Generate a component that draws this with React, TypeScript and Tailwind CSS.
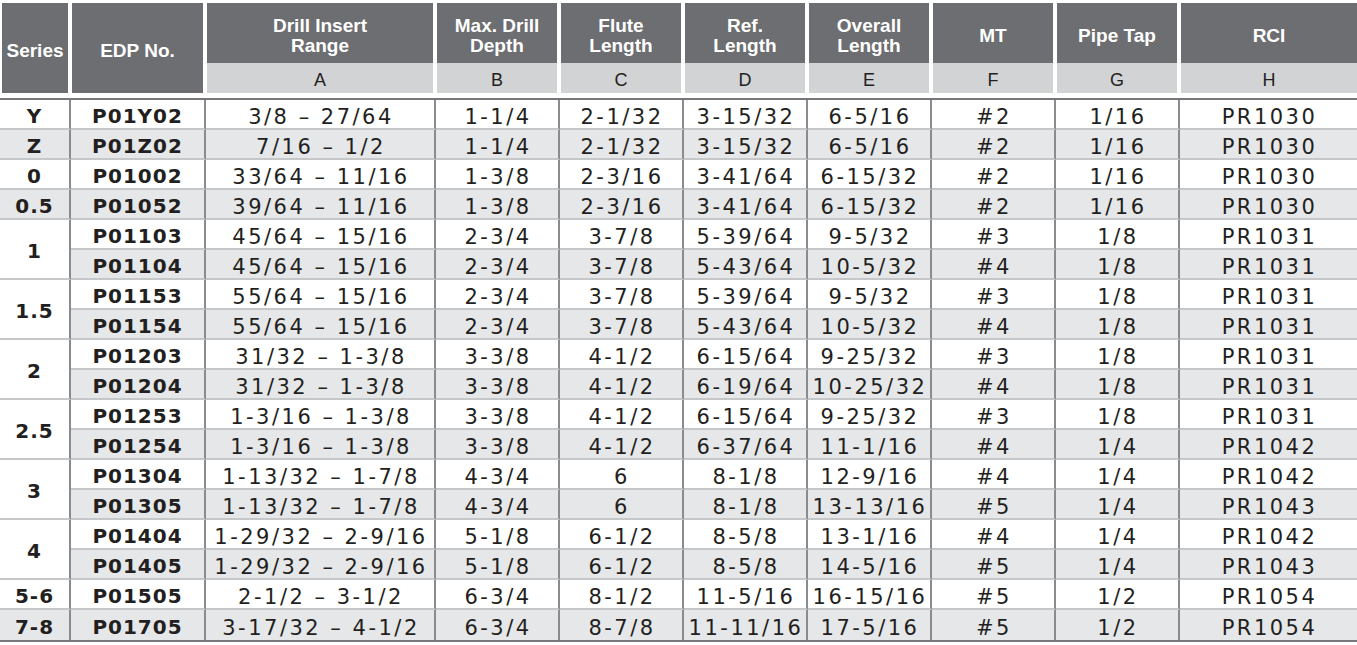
const head = [
  { top: ['Drill Insert', 'Range'], sub: 'A' },
  { top: ['Max. Drill', 'Depth'], sub: 'B' },
  { top: ['Flute', 'Length'], sub: 'C' },
  { top: ['Ref.', 'Length'], sub: 'D' },
  { top: ['Overall', 'Length'], sub: 'E' },
  { top: ['MT'], sub: 'F' },
  { top: ['Pipe Tap'], sub: 'G' },
  { top: ['RCI'], sub: 'H' },
];

// series, span (0 = covered by row above), edp, then A..H
const rows: [string, number, string, string[]][] = [
  ['Y', 1, 'P01Y02', ['3/8 – 27/64', '1-1/4', '2-1/32', '3-15/32', '6-5/16', '#2', '1/16', 'PR1030']],
  ['Z', 1, 'P01Z02', ['7/16 – 1/2', '1-1/4', '2-1/32', '3-15/32', '6-5/16', '#2', '1/16', 'PR1030']],
  ['0', 1, 'P01002', ['33/64 – 11/16', '1-3/8', '2-3/16', '3-41/64', '6-15/32', '#2', '1/16', 'PR1030']],
  ['0.5', 1, 'P01052', ['39/64 – 11/16', '1-3/8', '2-3/16', '3-41/64', '6-15/32', '#2', '1/16', 'PR1030']],
  ['1', 2, 'P01103', ['45/64 – 15/16', '2-3/4', '3-7/8', '5-39/64', '9-5/32', '#3', '1/8', 'PR1031']],
  ['', 0, 'P01104', ['45/64 – 15/16', '2-3/4', '3-7/8', '5-43/64', '10-5/32', '#4', '1/8', 'PR1031']],
  ['1.5', 2, 'P01153', ['55/64 – 15/16', '2-3/4', '3-7/8', '5-39/64', '9-5/32', '#3', '1/8', 'PR1031']],
  ['', 0, 'P01154', ['55/64 – 15/16', '2-3/4', '3-7/8', '5-43/64', '10-5/32', '#4', '1/8', 'PR1031']],
  ['2', 2, 'P01203', ['31/32 – 1-3/8', '3-3/8', '4-1/2', '6-15/64', '9-25/32', '#3', '1/8', 'PR1031']],
  ['', 0, 'P01204', ['31/32 – 1-3/8', '3-3/8', '4-1/2', '6-19/64', '10-25/32', '#4', '1/8', 'PR1031']],
  ['2.5', 2, 'P01253', ['1-3/16 – 1-3/8', '3-3/8', '4-1/2', '6-15/64', '9-25/32', '#3', '1/8', 'PR1031']],
  ['', 0, 'P01254', ['1-3/16 – 1-3/8', '3-3/8', '4-1/2', '6-37/64', '11-1/16', '#4', '1/4', 'PR1042']],
  ['3', 2, 'P01304', ['1-13/32 – 1-7/8', '4-3/4', '6', '8-1/8', '12-9/16', '#4', '1/4', 'PR1042']],
  ['', 0, 'P01305', ['1-13/32 – 1-7/8', '4-3/4', '6', '8-1/8', '13-13/16', '#5', '1/4', 'PR1043']],
  ['4', 2, 'P01404', ['1-29/32 – 2-9/16', '5-1/8', '6-1/2', '8-5/8', '13-1/16', '#4', '1/4', 'PR1042']],
  ['', 0, 'P01405', ['1-29/32 – 2-9/16', '5-1/8', '6-1/2', '8-5/8', '14-5/16', '#5', '1/4', 'PR1043']],
  ['5-6', 1, 'P01505', ['2-1/2 – 3-1/2', '6-3/4', '8-1/2', '11-5/16', '16-15/16', '#5', '1/2', 'PR1054']],
  ['7-8', 1, 'P01705', ['3-17/32 – 4-1/2', '6-3/4', '8-7/8', '11-11/16', '17-5/16', '#5', '1/2', 'PR1054']],
];

function App() {
  return (
    <div className="w-[1357px] h-[645px] bg-white overflow-hidden text-[#231f20]">
      {/* header */}
      <div className="mt-[3px] pl-[2px] grid grid-cols-[66px_131px_226px_120px_120px_120px_120px_120px_120px_176px] gap-x-[4px] font-['Liberation_Sans',Arial,sans-serif]">
        <div className="h-[90px] bg-[#6d6e71] text-white font-bold text-[19px] flex items-center justify-center pt-[7px]">Series</div>
        <div className="h-[90px] bg-[#6d6e71] text-white font-bold text-[19px] flex items-center justify-center pt-[7px]">EDP No.</div>
        {head.map((h) => (
          <div key={h.sub} className="flex flex-col">
            <div className="h-[60px] bg-[#6d6e71] text-white font-bold text-[19px] leading-[20px] flex flex-col items-center justify-center pt-[5px]">
              {h.top.map((t) => (
                <span key={t}>{t}</span>
              ))}
            </div>
            <div className="h-[30px] bg-[#d1d3d4] text-[18px] flex items-center justify-center pt-[5px]">{h.sub}</div>
          </div>
        ))}
      </div>

      {/* body */}
      <div className="mt-[5px] border-t-2 border-b-2 border-[#77787b] grid grid-cols-[71px_135px_230px_124px_124px_124px_124px_124px_124px_177px] auto-rows-[30px] font-['DejaVu_Sans',sans-serif]">
        {rows.map(([series, span, edp, vals], i) => {
          const last = i === rows.length - 1;
          const stripe = i % 2 === 1 ? 'bg-[#e6e7e8]' : 'bg-white';
          const line = last ? '' : 'border-b-2 border-b-[#c6c7c9]';
          const cell = `${stripe} ${line} flex items-center justify-center`;
          return [
            span === 1 && (
              <div key={`s${i}`} className={`${cell} pt-[3px] border-r-2 border-r-[#8a8b8e] font-bold text-[20px] tracking-[1px]`}>
                {series}
              </div>
            ),
            span === 2 && (
              <div
                key={`s${i}`}
                className="row-span-2 bg-white border-b-2 border-b-[#c6c7c9] border-r-2 border-r-[#8a8b8e] font-bold text-[20px] tracking-[1px] flex items-center justify-center pt-[3px]"
              >
                {series}
              </div>
            ),
            <div key={`e${i}`} className={`${cell} pt-[3px] border-r-2 border-r-[#8a8b8e] font-bold text-[20px] tracking-[1px]`}>
              {edp}
            </div>,
            ...vals.map((v, j) => (
              <div
                key={`v${i}-${j}`}
                className={`${cell} pt-[8px] text-[21px] tracking-[2.5px] pl-[2px] ${j < 7 ? 'border-r-2 border-r-[#8a8b8e]' : ''}`}
              >
                {v}
              </div>
            )),
          ];
        })}
      </div>
    </div>
  );
}

export default App;
